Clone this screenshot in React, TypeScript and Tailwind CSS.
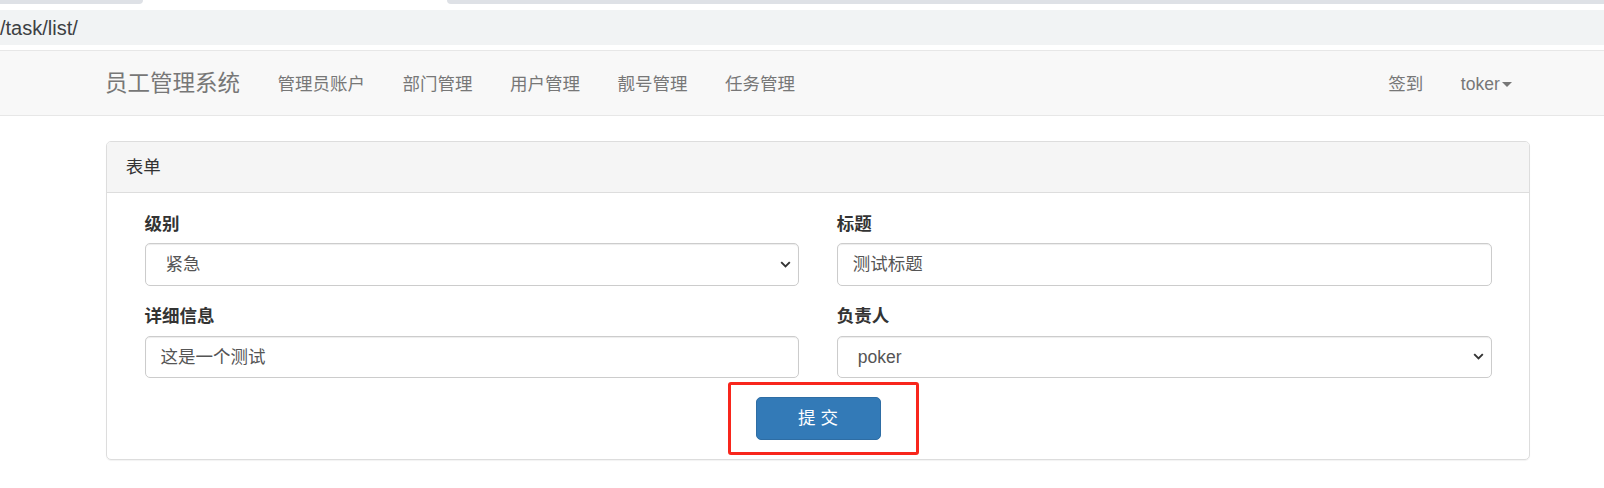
import React from "react";

const FONT = "font-['Liberation_Sans','Noto_Sans_CJK_SC',sans-serif]";

function Chevron() {
  return (
    <svg width="11" height="7" viewBox="0 0 11 7" className="shrink-0">
      <path d="M1.2 1.2 L5.5 5.5 L9.8 1.2" fill="none" stroke="#333" strokeWidth="1.9" />
    </svg>
  );
}

function Field({
  label,
  value,
  select,
}: {
  label: string;
  value: string;
  select?: boolean;
}) {
  return (
    <div className="px-[18.75px]">
      <div className="font-bold text-[17.5px] leading-[25px] text-[#333] mb-[6.25px]">{label}</div>
      <div
        className={
          "h-[42.5px] border border-[#ccc] rounded-[5px] bg-white flex items-center text-[17.5px] text-[#555] shadow-[inset_0_1px_1px_rgba(0,0,0,0.075)] " +
          (select ? "pl-[20px] pr-[7px]" : "pl-[15px] pr-[15px]")
        }
      >
        <span className="flex-1">{value}</span>
        {select ? <Chevron /> : null}
      </div>
    </div>
  );
}

export default function App() {
  return (
    <div className={"w-[1604px] h-[488px] overflow-hidden bg-white " + FONT}>
      {/* browser tab strip */}
      <div className="flex h-[10px]">
        <div className="w-[143px] h-[4px] bg-[#dee1e6] rounded-br-[8px]" />
        <div className="w-[304px]" />
        <div className="flex-1 h-[4px] bg-[#dee1e6] rounded-bl-[8px]" />
      </div>
      {/* address bar */}
      <div className="h-[35px] bg-[#f1f3f4] flex items-center text-[20px] text-[#3c4043] pt-[1px]">
        /task/list/
      </div>
      <div className="h-[5px]" />

      {/* navbar */}
      <nav className="h-[66px] bg-[#f8f8f8] border-y border-[#e7e7e7]">
        <div className="ml-[105px] w-[1426px] h-full flex items-center text-[#777] pt-[3px]">
          <div className="text-[22.5px] mr-[37.5px] leading-none">员工管理系统</div>
          <div className="flex gap-[37.5px] text-[17.5px]">
            <span>管理员账户</span>
            <span>部门管理</span>
            <span>用户管理</span>
            <span>靓号管理</span>
            <span>任务管理</span>
          </div>
          <div className="ml-auto flex items-center gap-[37.5px] text-[17.5px] mr-[18.75px]">
            <span>签到</span>
            <span className="flex items-center">
              toker
              <span className="inline-block w-0 h-0 ml-[2.5px] border-x-[5px] border-x-transparent border-t-[5px] border-t-[#777]" />
            </span>
          </div>
        </div>
      </nav>

      {/* panel */}
      <div className="mt-[25px] ml-[106px] w-[1424px] border border-[#ddd] rounded-[5px] shadow-[0_1px_1px_rgba(0,0,0,0.05)]">
        <div className="h-[51px] bg-[#f5f5f5] border-b border-[#ddd] rounded-t-[4px] px-[18.75px] flex items-center text-[17.5px] text-[#333]">
          表单
        </div>
        <div className="p-[18.75px]">
          <div className="grid grid-cols-2 gap-y-[18.75px]">
            <Field label="级别" value="紧急" select />
            <Field label="标题" value="测试标题" />
            <Field label="详细信息" value="这是一个测试" />
            <Field label="负责人" value="poker" select />
          </div>
          <div className="flex justify-center mt-[19px]">
            <div className="relative">
              <button className="w-[125px] h-[43px] bg-[#337ab7] border border-[#2e6da4] rounded-[5px] text-white text-[17.5px]">
                提 交
              </button>
              <div className="absolute left-[-28px] right-[-38px] top-[-15px] bottom-[-15px] border-[3px] border-[#f8261c] rounded-[3px]" />
            </div>
          </div>
        </div>
      </div>
    </div>
  );
}
